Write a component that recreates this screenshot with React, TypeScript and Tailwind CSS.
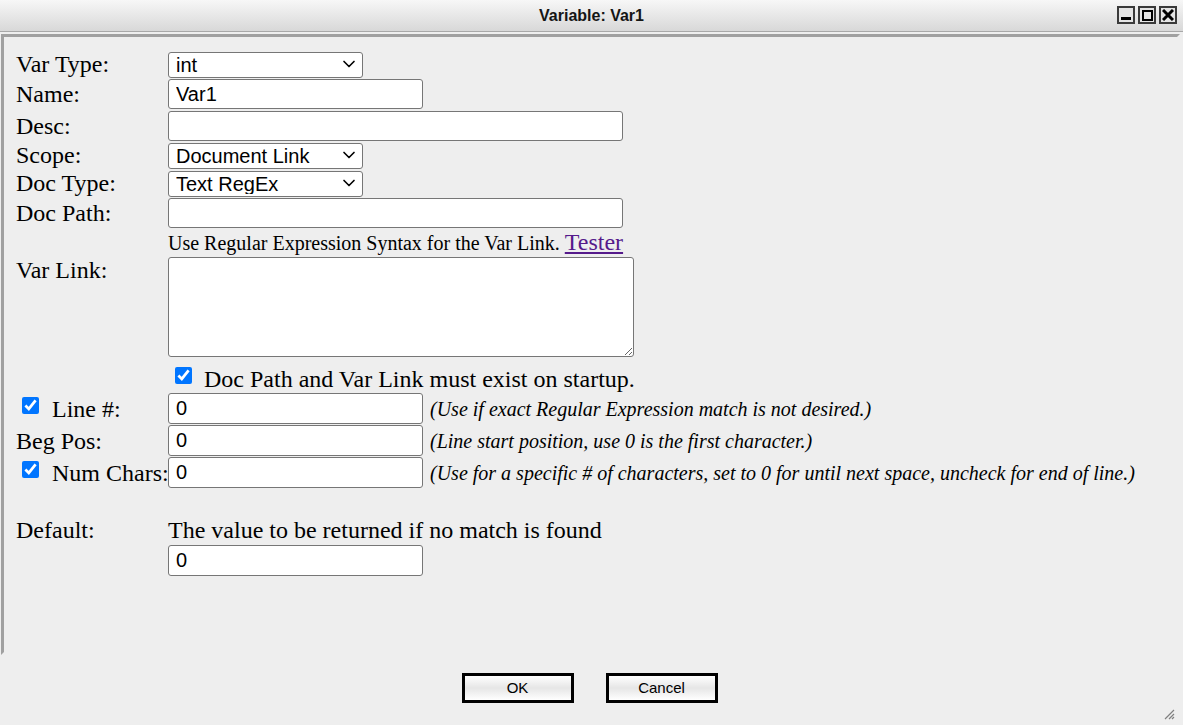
import { ChevronDown } from "lucide-react"

function Select({ value, width }: { value: string; width: string }) {
  return (
    <div className={`relative h-[26px] ${width}`}>
      <select
        defaultValue={value}
        className="h-full w-full appearance-none rounded-[3px] border border-[#767676] bg-white pl-[7px] font-['Liberation_Sans',Arial,sans-serif] text-[20px] leading-none text-black"
      >
        <option>{value}</option>
      </select>
      <ChevronDown
        className="pointer-events-none absolute right-[4px] top-[3px] h-[20px] w-[20px] text-black"
        strokeWidth={2}
      />
    </div>
  )
}

function TextBox({ value = "", width, height }: { value?: string; width: string; height: string }) {
  return (
    <input
      defaultValue={value}
      className={`${width} ${height} rounded-[3px] border border-[#767676] bg-white px-[7px] font-['Liberation_Sans',Arial,sans-serif] text-[20px] text-black`}
    />
  )
}

function Check() {
  return <input type="checkbox" defaultChecked className="mb-[7px] h-[17px] w-[17px] shrink-0 accent-[#0075ff]" />
}

function Hint({ children }: { children: React.ReactNode }) {
  return <span className="ml-[7px] whitespace-nowrap text-[20px] italic leading-[26px]">{children}</span>
}

export default function App() {
  return (
    <div className="flex h-[725px] w-full flex-col overflow-hidden bg-[#eeeeee] font-['Liberation_Serif','Times_New_Roman',serif] text-black">
      {/* title bar */}
      <div className="relative flex h-[32px] shrink-0 items-center justify-center border-b border-[#a8a8a8] bg-gradient-to-b from-[#f7f7f7] to-[#d8d8d8]">
        <span className="font-['Liberation_Sans',Arial,sans-serif] text-[16px] font-bold text-[#151515]">Variable: Var1</span>
        <div className="absolute right-[6px] top-[6px] flex gap-[3px]">
          <div className="flex h-[18px] w-[18px] items-end justify-center border-2 border-[#3a3a3a] bg-[#e4e4e4] pb-[2px]">
            <div className="h-[3px] w-[10px] bg-black" />
          </div>
          <div className="flex h-[18px] w-[18px] items-center justify-center border-2 border-[#3a3a3a] bg-[#e4e4e4]">
            <div className="h-[11px] w-[11px] border-2 border-black" />
          </div>
          <div className="flex h-[18px] w-[18px] items-center justify-center border-2 border-[#3a3a3a] bg-[#e4e4e4]">
            <svg width="12" height="12" viewBox="0 0 12 12">
              <path d="M1 1L11 11M11 1L1 11" stroke="black" strokeWidth="3" />
            </svg>
          </div>
        </div>
      </div>

      {/* form panel */}
      <div className="ml-[1px] mr-[3px] mt-[2px] h-[621px] shrink-0 border-[3px] border-b-[#eeeeee] border-l-[#a0a0a0] border-r-[#eeeeee] border-t-[#a0a0a0] pl-[12px] pt-[14px] text-[24px] leading-[26px]">
        <div className="flex h-[26px] items-center">
          <div className="w-[152px] shrink-0">Var Type:</div>
          <Select value="int" width="w-[195px]" />
        </div>
        <div className="mt-[2px] flex h-[30px] items-center">
          <div className="w-[152px] shrink-0">Name:</div>
          <TextBox value="Var1" width="w-[255px]" height="h-[30px]" />
        </div>
        <div className="mt-[2px] flex h-[30px] items-center">
          <div className="w-[152px] shrink-0">Desc:</div>
          <TextBox width="w-[455px]" height="h-[30px]" />
        </div>
        <div className="mt-[1px] flex h-[26px] items-center">
          <div className="w-[152px] shrink-0">Scope:</div>
          <Select value="Document Link" width="w-[195px]" />
        </div>
        <div className="mt-[2px] flex h-[26px] items-center">
          <div className="w-[152px] shrink-0">Doc Type:</div>
          <Select value="Text RegEx" width="w-[195px]" />
        </div>
        <div className="mt-[2px] flex h-[30px] items-center">
          <div className="w-[152px] shrink-0">Doc Path:</div>
          <TextBox width="w-[455px]" height="h-[30px]" />
        </div>
        <div className="h-[29px] whitespace-nowrap pl-[152px] text-[20px] leading-[30px]">
          Use Regular Expression Syntax for the Var Link.{" "}
          <a href="#" className="text-[24px] leading-none text-[#551a8b] underline">
            Tester
          </a>
        </div>
        <div className="flex items-start">
          <div className="w-[152px] shrink-0">Var Link:</div>
          <textarea className="h-[100px] w-[466px] rounded-[3px] border border-[#767676] bg-white" />
        </div>
        <div className="flex h-[34px] items-center pl-[159px] pt-[10px]">
          <Check />
          <span className="ml-[12px] whitespace-nowrap">Doc Path and Var Link must exist on startup.</span>
        </div>
        <div className="mt-[2px] flex h-[31px] items-center">
          <div className="flex w-[152px] shrink-0 items-center pl-[6px]">
            <Check />
            <span className="ml-[13px] whitespace-nowrap">Line #:</span>
          </div>
          <TextBox value="0" width="w-[255px]" height="h-[31px]" />
          <Hint>(Use if exact Regular Expression match is not desired.)</Hint>
        </div>
        <div className="mt-[1px] flex h-[31px] items-center">
          <div className="w-[152px] shrink-0">Beg Pos:</div>
          <TextBox value="0" width="w-[255px]" height="h-[31px]" />
          <Hint>(Line start position, use 0 is the first character.)</Hint>
        </div>
        <div className="mt-[1px] flex h-[31px] items-center">
          <div className="flex w-[152px] shrink-0 items-center pl-[6px]">
            <Check />
            <span className="ml-[13px] whitespace-nowrap">Num Chars:</span>
          </div>
          <TextBox value="0" width="w-[255px]" height="h-[31px]" />
          <Hint>(Use for a specific # of characters, set to 0 for until next space, uncheck for end of line.)</Hint>
        </div>
        <div className="mt-[29px] flex h-[26px] items-center">
          <div className="w-[152px] shrink-0">Default:</div>
          <span className="whitespace-nowrap">The value to be returned if no match is found</span>
        </div>
        <div className="mt-[2px] pl-[152px]">
          <TextBox value="0" width="w-[255px]" height="h-[31px]" />
        </div>
      </div>

      {/* buttons */}
      <div className="relative flex flex-1 items-start justify-center gap-[32px] pr-[4px] pt-[18px]">
        <button className="h-[30px] w-[112px] border-[3px] border-black bg-gradient-to-b from-white via-[#e6e6e6] to-white font-['Liberation_Sans',Arial,sans-serif] text-[15px] text-black">
          OK
        </button>
        <button className="h-[30px] w-[112px] border-[3px] border-black bg-gradient-to-b from-white via-[#e6e6e6] to-white font-['Liberation_Sans',Arial,sans-serif] text-[15px] text-black">
          Cancel
        </button>
        <svg className="absolute bottom-[5px] right-[8px]" width="12" height="12" viewBox="0 0 12 12">
          <path d="M11 2L2 11M11 6L6 11M11 9L9 11" stroke="#808080" strokeWidth="1.2" />
        </svg>
      </div>
    </div>
  )
}
